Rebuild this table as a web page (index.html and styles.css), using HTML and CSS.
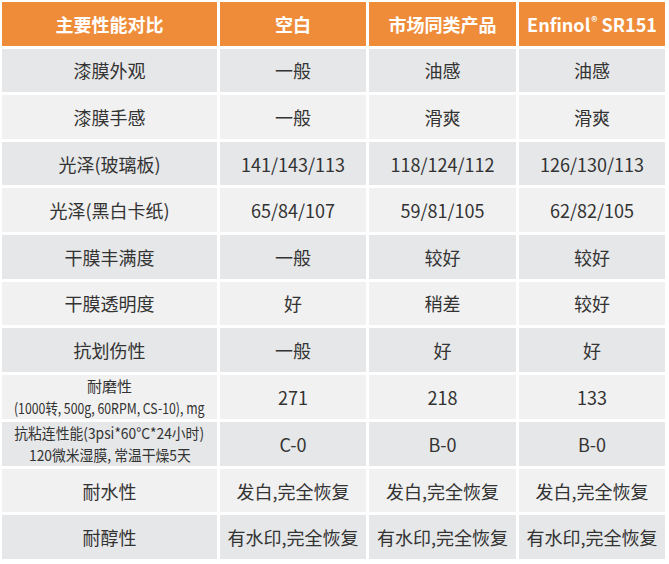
FILE: index.html
```html
<!DOCTYPE html>
<html lang="zh">
<head>
<meta charset="utf-8">
<link rel="stylesheet" href="styles.css">
</head>
<body>
<div class="table">
  <div class="cell head">主要性能对比</div>
  <div class="cell head">空白</div>
  <div class="cell head">市场同类产品</div>
  <div class="cell head"><span>Enfinol<sup class="reg">®</sup> SR151</span></div>

  <div class="cell d">漆膜外观</div><div class="cell d">一般</div><div class="cell d">油感</div><div class="cell d">油感</div>
  <div class="cell l">漆膜手感</div><div class="cell l">一般</div><div class="cell l">滑爽</div><div class="cell l">滑爽</div>
  <div class="cell d">光泽(玻璃板)</div><div class="cell d">141/143/113</div><div class="cell d">118/124/112</div><div class="cell d">126/130/113</div>
  <div class="cell l">光泽(黑白卡纸)</div><div class="cell l">65/84/107</div><div class="cell l">59/81/105</div><div class="cell l">62/82/105</div>
  <div class="cell d">干膜丰满度</div><div class="cell d">一般</div><div class="cell d">较好</div><div class="cell d">较好</div>
  <div class="cell l">干膜透明度</div><div class="cell l">好</div><div class="cell l">稍差</div><div class="cell l">较好</div>
  <div class="cell d">抗划伤性</div><div class="cell d">一般</div><div class="cell d">好</div><div class="cell d">好</div>
  <div class="cell l small"><span>耐磨性</span><span class="cond">(1000转, 500g, 60RPM, CS-10), mg</span></div><div class="cell l">271</div><div class="cell l">218</div><div class="cell l">133</div>
  <div class="cell d small"><span class="narrow">抗粘连性能(3psi*60°C*24小时)</span><span class="narrow">120微米湿膜, 常温干燥5天</span></div><div class="cell d">C-0</div><div class="cell d">B-0</div><div class="cell d">B-0</div>
  <div class="cell l">耐水性</div><div class="cell l">发白,完全恢复</div><div class="cell l">发白,完全恢复</div><div class="cell l">发白,完全恢复</div>
  <div class="cell d">耐醇性</div><div class="cell d">有水印,完全恢复</div><div class="cell d">有水印,完全恢复</div><div class="cell d">有水印,完全恢复</div>
</div>
</body>
</html>
```
FILE: styles.css
```css
html, body {
  margin: 0;
  padding: 0;
  background: #ffffff;
}
body {
  font-family: "Noto Sans CJK SC", "Noto Sans", sans-serif;
  color: #333333;
}
.table {
  display: grid;
  grid-template-columns: 215px 146px 147px 146px;
  grid-template-rows: repeat(12, 1fr);
  gap: 3px;
  padding: 2px;
  width: 663px;
  height: 557px;
}
.cell {
  display: flex;
  align-items: center;
  justify-content: center;
  text-align: center;
  font-size: 18px;
  line-height: 1;
  white-space: nowrap;
}
.head {
  background: #ef8c3a;
  color: #ffffff;
  font-weight: 700;
}
.reg {
  font-size: 12px;
  vertical-align: 6px;
  line-height: 0;
  margin-left: 1px;
}
.d { background: #e6e7e8; }
.l { background: #f1f1f1; }
.small {
  flex-direction: column;
  font-size: 15px;
  line-height: 22px;
}
.cond {
  display: inline-block;
  font-size: 15px;
  transform: scaleX(0.82);
}
.narrow {
  display: inline-block;
  transform: scaleX(0.92);
}
```
